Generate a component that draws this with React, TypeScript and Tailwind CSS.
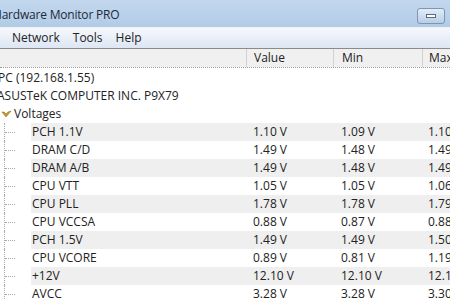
import React from "react";

type Reading = { name: string; value: string; min: string; max: string };

const readings: Reading[] = [
  { name: "PCH 1.1V", value: "1.10 V", min: "1.09 V", max: "1.10 V" },
  { name: "DRAM C/D", value: "1.49 V", min: "1.48 V", max: "1.49 V" },
  { name: "DRAM A/B", value: "1.49 V", min: "1.48 V", max: "1.49 V" },
  { name: "CPU VTT", value: "1.05 V", min: "1.05 V", max: "1.06 V" },
  { name: "CPU PLL", value: "1.78 V", min: "1.78 V", max: "1.79 V" },
  { name: "CPU VCCSA", value: "0.88 V", min: "0.87 V", max: "0.88 V" },
  { name: "PCH 1.5V", value: "1.49 V", min: "1.49 V", max: "1.50 V" },
  { name: "CPU VCORE", value: "0.89 V", min: "0.81 V", max: "1.19 V" },
  { name: "+12V", value: "12.10 V", min: "12.10 V", max: "12.10 V" },
  { name: "AVCC", value: "3.28 V", min: "3.28 V", max: "3.30 V" },
];

const cols = "grid grid-cols-[247px_87px_89px_1fr]";

export default function App() {
  return (
    <div className="w-[450px] h-[300px] overflow-hidden bg-white text-[12px] text-[#222] font-['Open_Sans','Noto_Sans',sans-serif] flex flex-col">
      {/* title bar */}
      <div className="h-[27px] shrink-0 flex items-center bg-gradient-to-b from-[#c3d8ee] to-[#b2cbe6]">
        <span className="ml-[-7px] mt-[3px] text-[12px] tracking-[-0.2px] text-[#1b2a3a] whitespace-nowrap">Hardware Monitor PRO</span>
        <div className="ml-auto mr-[5px] w-[28px] h-[16px] mt-[5px] rounded-[3px] border border-[#7e95b3] bg-gradient-to-b from-[#e3edf8] to-[#b9cde5] flex items-center justify-center">
          <div className="w-[10px] h-[4px] bg-white border border-[#566b87]" />
        </div>
      </div>

      {/* menu bar */}
      <div className="h-[21px] shrink-0 flex items-center gap-[13px] pl-[12px] bg-gradient-to-b from-[#f6f8fc] to-[#dde6f3] border-t border-[#eef3fa]">
        <span>Network</span>
        <span>Tools</span>
        <span>Help</span>
      </div>

      {/* column header */}
      <div className={`${cols} h-[19px] shrink-0 border-t border-[#8a8a8a] bg-[#f0f0f0] items-center`}>
        <div className="h-full border-r border-[#d2d2d2]" />
        <div className="h-full border-r border-[#d2d2d2] pl-[7px] flex items-center">Value</div>
        <div className="h-full border-r border-[#d2d2d2] pl-[8px] flex items-center">Min</div>
        <div className="h-full pl-[6px] flex items-center whitespace-nowrap">Max</div>
      </div>
      <div className="h-[1px] shrink-0 border-t border-dotted border-[#9a9a9a]" />

      {/* tree */}
      <div className="flex flex-col pt-[1px]">
        <div className="h-[18px] flex items-center ml-[-2px] whitespace-nowrap">PC (192.168.1.55)</div>
        <div className="h-[18px] flex items-center ml-[-3px] whitespace-nowrap">ASUSTeK COMPUTER INC. P9X79</div>
        <div className="h-[18px] flex items-center gap-[2px] pl-[1px]">
          <svg width="11" height="9" viewBox="0 0 11 9">
            <path d="M1 2 L5 7 L10 1 L7 2 L5 4 L3 2 Z" fill="#c79a2c" stroke="#9a7420" strokeWidth="0.6" />
          </svg>
          <span>Voltages</span>
        </div>
        <div className="flex">
          <div className="w-[31px] shrink-0 flex flex-col">
            {readings.map((r) => (
              <div key={r.name} className="h-[18px] flex items-center pl-[4px]">
                <div className="w-[1px] h-full border-l border-dotted border-[#a8a8a8]" />
                <div className="w-[10px] h-[1px] border-t border-dotted border-[#a8a8a8]" />
              </div>
            ))}
          </div>
          <div className="flex-1 flex flex-col">
            {readings.map((r, i) => (
              <div
                key={r.name}
                className={`grid grid-cols-[216px_87px_89px_1fr] h-[18px] items-center whitespace-nowrap ${i % 2 === 0 ? "bg-[#efefef]" : ""}`}
              >
                <div className="pl-[1px]">{r.name}</div>
                <div className="pl-[6px]">{r.value}</div>
                <div className="pl-[7px]">{r.min}</div>
                <div className="pl-[5px]">{r.max}</div>
              </div>
            ))}
          </div>
        </div>
      </div>
    </div>
  );
}
